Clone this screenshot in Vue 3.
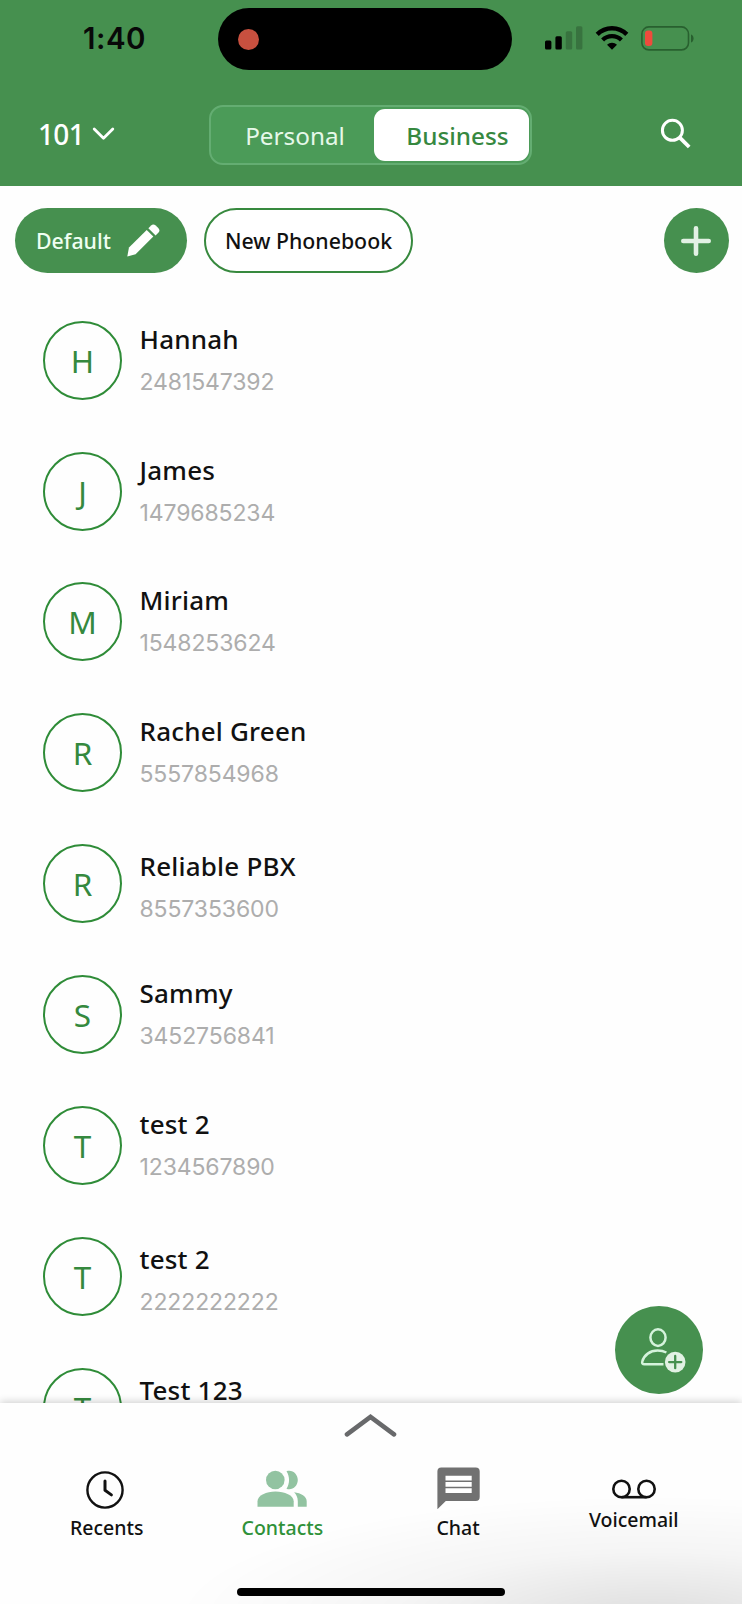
<template>
  <div class="phone">
    <header class="header">
      <div class="status-bar">
        <span class="time">1:40</span>
        <div class="island"><i class="record-dot"></i></div>
        <div class="status-icons">
          <svg class="signal" width="38" height="24" viewBox="0 0 38 24">
            <rect x="0" y="14.5" width="6.4" height="9" rx="1.5" />
            <rect x="10.4" y="10.2" width="6.4" height="13.3" rx="1.5" />
            <rect class="dim" x="20.8" y="5.3" width="6.4" height="18.2" rx="1.5" />
            <rect class="dim" x="31" y="0.3" width="6.4" height="23.2" rx="1.5" />
          </svg>
          <svg class="wifi" width="34" height="24" viewBox="0 0 34 24">
            <path d="M2.2 8.4a20.8 20.8 0 0 1 29.6 0" fill="none" stroke="#000" stroke-width="4.4" />
            <path d="M7.6 14a13.2 13.2 0 0 1 18.8 0" fill="none" stroke="#000" stroke-width="4.2" />
            <path d="M17 23.7l-5-5a7.1 7.1 0 0 1 10 0z" />
          </svg>
          <svg class="battery" width="53" height="25" viewBox="0 0 53 25">
            <rect x="0.9" y="0.9" width="46.6" height="23" rx="7" fill="none" stroke="#28602f" stroke-width="1.6" />
            <rect x="4" y="4.6" width="7.4" height="15.4" rx="3" fill="#ee4b3c" />
            <path d="M50 8.5c3.4 1 3.4 7 0 8z" fill="#28602f" />
          </svg>
        </div>
      </div>
      <div class="toolbar">
        <button class="extension">
          <span>101</span>
          <svg width="24" height="16" viewBox="0 0 24 16">
            <path d="M2.2 3l9.3 9.3L20.8 3" fill="none" stroke="#fff" stroke-width="2.8" stroke-linecap="round" stroke-linejoin="round" />
          </svg>
        </button>
        <div class="switch">
          <button
            v-for="tab in tabs"
            :key="tab"
            :class="['switch-item', { active: tab === activeTab }]"
            @click="activeTab = tab"
          >{{ tab }}</button>
        </div>
        <button class="search">
          <svg width="32" height="32" viewBox="0 0 32 32">
            <circle cx="12.4" cy="12.3" r="10" fill="none" stroke="#fff" stroke-width="3" />
            <path d="M19.8 19.6l9.4 9.4" stroke="#fff" stroke-width="3.8" />
          </svg>
        </button>
      </div>
    </header>

    <div class="phonebooks">
      <button class="pill pill-default">
        <span>Default</span>
        <svg width="33" height="33" viewBox="0 0 33 33" fill="#fff">
          <path d="M0.3 32.5L2 23.6 19.7 5.9l6.6 6.6L8.6 30.2z" />
          <path d="M21.4 4.2l2.7-2.7q2.2-2 4.6 0l2.6 2.6q2.2 2.3 0 4.6l-2.7 2.7z" />
        </svg>
      </button>
      <button class="pill pill-new">New Phonebook</button>
      <button class="add">
        <svg width="32" height="32" viewBox="0 0 32 32">
          <path d="M16 3.3v25.4M3.3 16h25.4" stroke="#e2f1e4" stroke-width="4.6" stroke-linecap="round" />
        </svg>
      </button>
    </div>

    <ul class="contacts">
      <li v-for="(item, index) in contacts" :key="index" :class="['contact', { lower: item.lower }]">
        <div class="avatar">{{ item.name[0].toUpperCase() }}</div>
        <div class="info">
          <p class="name">{{ item.name }}</p>
          <p class="number">{{ item.number }}</p>
        </div>
      </li>
    </ul>

    <!-- floating add contact button -->
    <button class="fab">
      <svg width="48" height="48" viewBox="0 0 48 48" fill="none">
        <ellipse cx="19" cy="11.6" rx="7.6" ry="8.3" stroke="#d5f3dc" stroke-width="2.5" />
        <path d="M24.5 38.3H5.4c-1.9 0-2.6-1-2.1-2.8C5 29 11 24.6 18.6 24.6c3.2 0 6.2.6 8.8 1.9" stroke="#d5f3dc" stroke-width="2.5" />
        <circle cx="36.2" cy="36.1" r="10.3" fill="#e2f1e4" />
        <path d="M36.2 30v12.2M30.1 36.1h12.2" stroke="#46904f" stroke-width="2.3" stroke-linecap="round" />
      </svg>
    </button>

    <nav class="tabbar">
      <svg class="expand" width="54" height="26" viewBox="0 0 54 26">
        <path d="M3 22.3L26.5 4.8 50 22.3" fill="none" stroke="#68696b" stroke-width="4.6" stroke-linecap="round" />
      </svg>
      <div class="tabs">
        <a class="tab">
          <span class="tab-icon recents-icon">
            <svg width="40" height="40" viewBox="0 0 40 40" fill="none" stroke="#111">
              <circle cx="20" cy="20" r="17.6" stroke-width="2.4" />
              <path d="M20 11v9.3l6.4 4.6" stroke-width="3" stroke-linecap="round" stroke-linejoin="round" />
            </svg>
          </span>
          <span>Recents</span>
        </a>
        <a class="tab current">
          <span class="tab-icon contacts-icon">
            <svg width="50" height="38" viewBox="0 0 50 38" fill="#92c3a1">
              <circle cx="18.3" cy="10" r="9.3" />
              <path d="M.5 36.8v-5.5c0-6 9-9.8 18-9.8s18.2 3.8 18.2 9.8v5.5z" />
              <path d="M29.5 1.2c5.8-2.1 11.3 2.8 11.3 8.8s-5.5 10.9-11.3 8.8c3.4-5.5 3.4-12.1 0-17.6z" />
              <path d="M37.1 22.2c7 .8 12.6 4.2 12.6 9.1v5.5h-8.9v-5.5c0-3.8-1.5-7-3.7-9.1z" />
            </svg>
          </span>
          <span>Contacts</span>
        </a>
        <a class="tab">
          <span class="tab-icon chat-icon">
            <svg width="43" height="43" viewBox="0 0 43 43">
              <path d="M4.3.5h34.4a4 4 0 0 1 4 4V30a4 4 0 0 1-4 4H8.8L.4 42.3V4.5a4 4 0 0 1 3.9-4z" fill="#717171" />
              <path d="M8.5 11.2h26.2M8.5 17.4h26.2M8.5 23.7h26.2" stroke="#fff" stroke-width="4.8" />
            </svg>
          </span>
          <span>Chat</span>
        </a>
        <a class="tab voicemail">
          <span class="tab-icon">
            <svg width="44" height="20" viewBox="0 0 44 20" fill="none" stroke="#111" stroke-width="2.6">
              <circle cx="9.5" cy="10" r="8.2" />
              <circle cx="34.5" cy="10" r="8.2" />
              <path d="M9.5 18.2h25" />
            </svg>
          </span>
          <span>Voicemail</span>
        </a>
      </div>
      <div class="home-indicator"></div>
    </nav>
  </div>
</template>

<script setup>
import { ref } from "vue";

const tabs = ["Personal", "Business"];
const activeTab = ref("Business");

// lower: the text block sits slightly lower in the row
const contacts = ref([
  { name: "Hannah", number: "2481547392" },
  { name: "James", number: "1479685234" },
  { name: "Miriam", number: "1548253624" },
  { name: "Rachel Green", number: "5557854968" },
  { name: "Reliable PBX", number: "8557353600", lower: true },
  { name: "Sammy", number: "3452756841" },
  { name: "test 2", number: "1234567890" },
  { name: "test 2", number: "2222222222", lower: true },
  { name: "Test 123", number: "", lower: true }
]);
</script>

<style>
body {
  margin: 0;
  background: #fefefe;
}
</style>

<style scoped>
.phone {
  position: relative;
  display: flex;
  flex-direction: column;
  width: 742px;
  height: 1604px;
  overflow: hidden;
  background: #fefefe;
  color: #111;
  font-family: "Noto Sans", "Open Sans", sans-serif;
}

button {
  margin: 0;
  padding: 0;
  border: 0;
  background: none;
  font: inherit;
  color: inherit;
  cursor: pointer;
}

svg {
  display: block;
  flex: none;
}

/* header */
.header {
  flex: none;
  box-sizing: border-box;
  height: 186.4px;
  background: #46904f;
}

.status-bar {
  display: grid;
  grid-template-columns: 217.5px 294px 1fr;
  height: 105.4px;
  padding-top: 8px;
  box-sizing: border-box;
}

.time {
  padding-left: 83px;
  font: 600 29.5px/61px Inter, sans-serif;
  letter-spacing: 0.5px;
  color: #080808;
}

.island {
  display: flex;
  align-items: center;
  height: 62px;
  padding-left: 20px;
  box-sizing: border-box;
  border-radius: 31px;
  background: #000;
}

.record-dot {
  width: 21px;
  height: 21px;
  border-radius: 50%;
  background: #c8503f;
}

.status-icons {
  display: flex;
  padding: 17.5px 0 0 33px;
}

.dim {
  fill: #38733f;
}

.wifi {
  margin-left: 12px;
}

.battery {
  margin-left: 12px;
}

.toolbar {
  display: flex;
  align-items: flex-start;
}

.extension {
  display: flex;
  align-items: center;
  gap: 8px;
  width: 209px;
  height: 58px;
  padding-left: 38px;
  box-sizing: border-box;
  font-size: 28px;
  font-weight: 500;
  letter-spacing: -0.7px;
  color: #fff;
}

.switch {
  display: grid;
  grid-template-columns: 1fr 155px;
  width: 323px;
  height: 60px;
  padding: 2px 1px 2px 2px;
  box-sizing: border-box;
  border: 2px solid #64ad72;
  border-radius: 14px;
  background: #4b9b58;
}

.switch-item {
  padding-left: 3px;
  border-radius: 11px;
  font-size: 24.3px;
  line-height: 51px;
  color: #e6f8e9;
}

.switch-item.active {
  padding-left: 12px;
  background: #fff;
  font-weight: 500;
  color: #36883f;
}

.search {
  margin: 12.6px 0 0 128px;
}

/* phonebook pills */
.phonebooks {
  display: flex;
  flex: none;
  height: 65px;
  margin: 22px 13.5px 0 15px;
  font-size: 21.3px;
  font-weight: 500;
}

.pill {
  box-sizing: border-box;
  height: 65px;
  border-radius: 33px;
  white-space: nowrap;
}

.pill-default {
  display: flex;
  align-items: center;
  gap: 16px;
  width: 172px;
  padding-left: 21px;
  background: #46904f;
  color: #effff1;
}

.pill-new {
  width: 209px;
  margin-left: 17px;
  border: 2px solid #37893e;
  background: #fff;
}

.add {
  display: flex;
  align-items: center;
  justify-content: center;
  width: 65px;
  height: 65px;
  margin-left: auto;
  border-radius: 50%;
  background: #46904f;
}

/* contact list */
.contacts {
  flex: 1;
  min-height: 0;
  overflow: hidden;
  margin: 47.2px 0 0;
  padding: 0 0 0 43px;
  list-style: none;
}

.contact {
  display: flex;
  height: 130.93px;
}

.avatar {
  flex: none;
  width: 79px;
  height: 79px;
  box-sizing: border-box;
  border: 2px solid #2f8c38;
  border-radius: 50%;
  font-size: 31.5px;
  line-height: 75px;
  text-align: center;
  color: #35893e;
}

.info {
  margin-left: 17.5px;
}

.lower .info {
  padding-top: 4px;
}

.name {
  margin: 0;
  font-size: 26px;
  font-weight: 500;
  line-height: 36px;
  letter-spacing: 0.2px;
}

.number {
  margin: 10px 0 0;
  font: 400 23px/30px Inter, sans-serif;
  letter-spacing: -0.12px;
  color: #adadad;
}

.fab {
  position: absolute;
  left: 615px;
  top: 1306px;
  display: flex;
  align-items: center;
  justify-content: center;
  box-sizing: border-box;
  width: 88px;
  height: 88px;
  padding-left: 8px;
  border-radius: 50%;
  background: #46904f;
}

/* bottom tab bar */
.tabbar {
  position: relative;
  display: flex;
  flex: none;
  flex-direction: column;
  align-items: center;
  height: 201.5px;
  background:
    radial-gradient(ellipse 480px 125px at 88% 108%, rgba(0, 0, 0, 0.13), rgba(0, 0, 0, 0.035) 55%, transparent),
    #fefefe;
  box-shadow: 0 -1px 8px rgba(0, 0, 0, 0.2);
}

.expand {
  margin: 9px 1px 0 0;
}

.tabs {
  display: grid;
  grid-template-columns: repeat(4, 175.7px);
  width: 702.8px;
  margin: 23px 1.5px 0 0;
}

.tab {
  display: flex;
  flex-direction: column;
  align-items: center;
  font-size: 19.5px;
  font-weight: 500;
  line-height: 26px;
}

.tab-icon {
  display: flex;
  align-items: center;
  justify-content: center;
  height: 54px;
}

.recents-icon {
  margin-left: -3px;
  padding-top: 4px;
  box-sizing: border-box;
}

.contacts-icon {
  padding-top: 3px;
  box-sizing: border-box;
}

.chat-icon {
  padding-top: 2px;
  box-sizing: border-box;
}

.current {
  color: #2f9139;
}

.voicemail .tab-icon {
  height: 46px;
  padding-top: 10px;
  box-sizing: border-box;
}

.home-indicator {
  width: 268px;
  height: 8.5px;
  margin-top: 47px;
  border-radius: 5px;
  background: #000;
}
</style>
